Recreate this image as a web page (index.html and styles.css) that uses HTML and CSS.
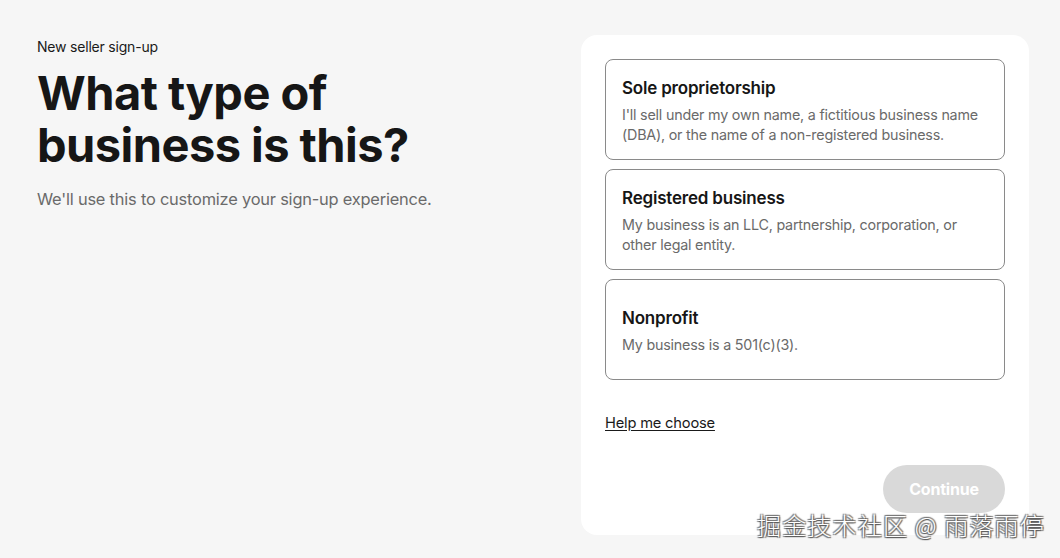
FILE: index.html
```html
<!DOCTYPE html>
<html lang="en">
<head>
<meta charset="utf-8">
<title>New seller sign-up</title>
<link rel="stylesheet" href="styles.css">
</head>
<body>
<main class="page">
  <section class="intro">
    <p class="eyebrow">New seller sign-up</p>
    <h1 class="title">What type of<br>business is this?</h1>
    <p class="lead">We'll use this to customize your sign-up experience.</p>
  </section>
  <section class="panel">
    <div class="options">
      <button class="option" type="button">
        <span class="option-title">Sole proprietorship</span>
        <span class="option-desc">I'll sell under my own name, a fictitious business name (DBA), or the name of a non-registered business.</span>
      </button>
      <button class="option" type="button">
        <span class="option-title">Registered business</span>
        <span class="option-desc">My business is an LLC, partnership, corporation, or other legal entity.</span>
      </button>
      <button class="option" type="button">
        <span class="option-title">Nonprofit</span>
        <span class="option-desc">My business is a 501(c)(3).</span>
      </button>
    </div>
    <a class="help" href="#">Help me choose</a>
    <div class="actions">
      <button class="continue" type="button" disabled>Continue</button>
    </div>
  </section>
</main>
<div class="watermark">掘金技术社区 @ 雨落雨停</div>
</body>
</html>
```
FILE: styles.css
```css
* { box-sizing: border-box; }
html, body { margin: 0; height: 100%; }
body {
  background: #f6f6f6;
  font-family: Inter, "Liberation Sans", "Noto Sans CJK SC", sans-serif;
  color: #1a1a1a;
  overflow: hidden;
}
.page {
  display: flex;
  justify-content: space-between;
  padding: 35px 31px 0 37px;
}
.intro {
  padding-top: 4px;
}
.eyebrow {
  margin: 0;
  font-size: 14px;
  line-height: 16px;
  letter-spacing: -0.2px;
  color: #1a1a1a;
}
.title {
  margin: 12px 0 0;
  font-size: 47px;
  line-height: 52px;
  font-weight: 700;
  letter-spacing: -0.55px;
  color: #161616;
}
.lead {
  margin: 16px 0 0;
  font-size: 16.4px;
  line-height: 24px;
  letter-spacing: -0.2px;
  color: #6a6a6a;
}
.panel {
  width: 448px;
  height: 500px;
  background: #fff;
  border-radius: 16px;
  padding: 24px 24px 22px;
  display: flex;
  flex-direction: column;
}
.options {
  display: flex;
  flex-direction: column;
  gap: 9px;
}
.option {
  display: flex;
  flex-direction: column;
  justify-content: center;
  align-items: flex-start;
  min-height: 101px;
  padding: 14px 16px 12px;
  background: #fff;
  border: 1px solid #8a8a8a;
  border-radius: 8px;
  text-align: left;
  font-family: inherit;
  cursor: pointer;
}
.option-title {
  font-size: 17px;
  line-height: 24px;
  font-weight: 600;
  letter-spacing: -0.2px;
  color: #161616;
}
.option-desc {
  margin-top: 5px;
  font-size: 14.3px;
  line-height: 20px;
  letter-spacing: -0.2px;
  color: #6a6a6a;
}
.help {
  margin-top: 33px;
  align-self: flex-start;
  font-size: 14.7px;
  line-height: 20px;
  letter-spacing: -0.2px;
  color: #1a1a1a;
  text-decoration: underline;
  text-underline-offset: 2px;
}
.actions {
  margin-top: auto;
  display: flex;
  justify-content: flex-end;
}
.continue {
  width: 122px;
  height: 48px;
  border: 0;
  border-radius: 24px;
  background: #d9d9d9;
  color: #fff;
  font-family: inherit;
  font-size: 16px;
  font-weight: 700;
  letter-spacing: -0.2px;
}
.watermark {
  position: absolute;
  right: 15px;
  bottom: 19px;
  font-family: "Noto Sans CJK SC", sans-serif;
  font-size: 24px;
  line-height: 28px;
  font-weight: 300;
  color: #fff;
  text-shadow: 1px 1px 1px #555, -1px -1px 1px #777, 1px -1px 1px #777, -1px 1px 1px #777;
  letter-spacing: 1.2px;
}
```
